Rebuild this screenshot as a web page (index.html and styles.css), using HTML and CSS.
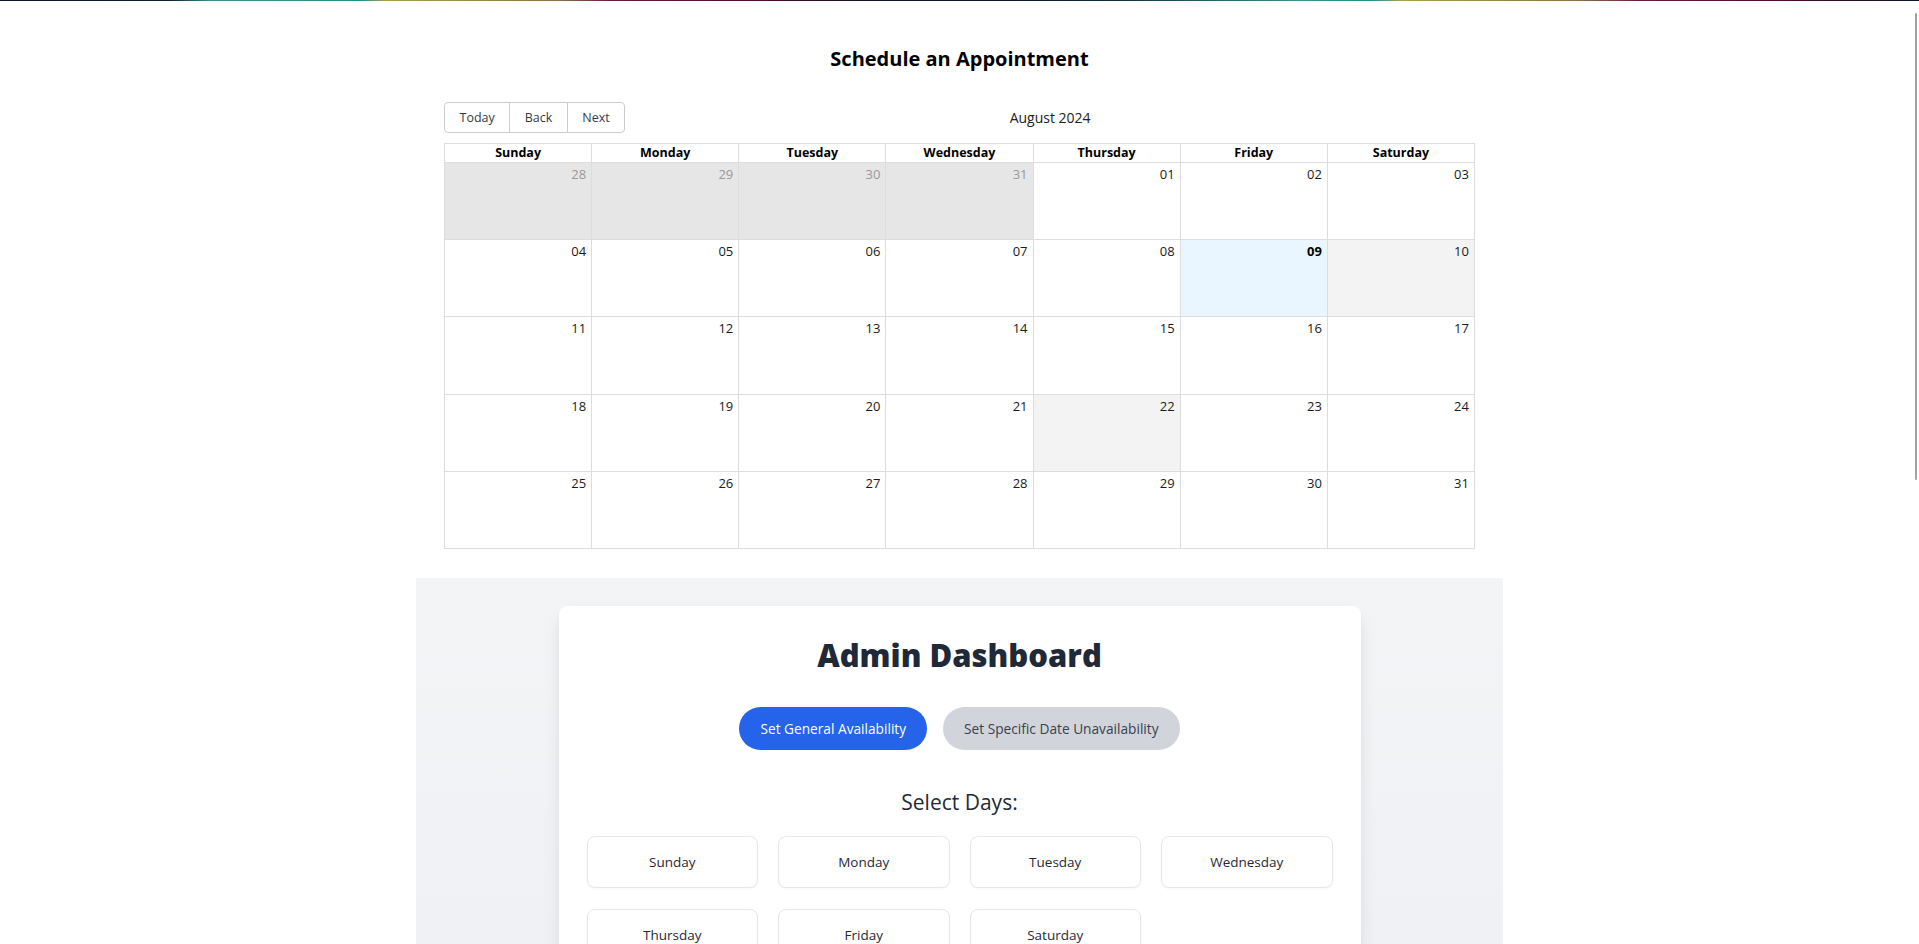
FILE: index.html
```html
<!DOCTYPE html>
<html lang="en">
<head>
<meta charset="utf-8">
<title>Schedule an Appointment</title>
<link rel="stylesheet" href="styles.css">
</head>
<body>
<div class="topbar"></div>
<div class="page">
  <section class="scheduler">
    <h1 class="sched-title">Schedule an Appointment</h1>
    <div class="calendar">
      <div class="toolbar">
        <div class="btn-group">
          <button type="button">Today</button>
          <button type="button">Back</button>
          <button type="button">Next</button>
        </div>
        <span class="toolbar-label">August 2024</span>
        <div class="btn-group"></div>
      </div>
      <div class="month">
        <div class="month-header">
          <div class="hcell">Sunday</div>
          <div class="hcell">Monday</div>
          <div class="hcell">Tuesday</div>
          <div class="hcell">Wednesday</div>
          <div class="hcell">Thursday</div>
          <div class="hcell">Friday</div>
          <div class="hcell">Saturday</div>
        </div>
        <div class="month-row">
          <div class="day off">28</div>
          <div class="day off">29</div>
          <div class="day off">30</div>
          <div class="day off">31</div>
          <div class="day">01</div>
          <div class="day">02</div>
          <div class="day">03</div>
        </div>
        <div class="month-row">
          <div class="day">04</div>
          <div class="day">05</div>
          <div class="day">06</div>
          <div class="day">07</div>
          <div class="day">08</div>
          <div class="day today">09</div>
          <div class="day blocked">10</div>
        </div>
        <div class="month-row">
          <div class="day">11</div>
          <div class="day">12</div>
          <div class="day">13</div>
          <div class="day">14</div>
          <div class="day">15</div>
          <div class="day">16</div>
          <div class="day">17</div>
        </div>
        <div class="month-row">
          <div class="day">18</div>
          <div class="day">19</div>
          <div class="day">20</div>
          <div class="day">21</div>
          <div class="day blocked">22</div>
          <div class="day">23</div>
          <div class="day">24</div>
        </div>
        <div class="month-row">
          <div class="day">25</div>
          <div class="day">26</div>
          <div class="day">27</div>
          <div class="day">28</div>
          <div class="day">29</div>
          <div class="day">30</div>
          <div class="day">31</div>
        </div>
      </div>
    </div>
  </section>

  <section class="admin">
    <div class="card">
      <h2 class="card-title">Admin Dashboard</h2>
      <div class="tabs">
        <button type="button" class="tab active">Set General Availability</button>
        <button type="button" class="tab">Set Specific Date Unavailability</button>
      </div>
      <h3 class="section-title">Select Days:</h3>
      <div class="days">
        <button type="button" class="day-btn">Sunday</button>
        <button type="button" class="day-btn">Monday</button>
        <button type="button" class="day-btn">Tuesday</button>
        <button type="button" class="day-btn">Wednesday</button>
        <button type="button" class="day-btn">Thursday</button>
        <button type="button" class="day-btn">Friday</button>
        <button type="button" class="day-btn">Saturday</button>
      </div>
    </div>
  </section>
</div>
<div class="scroll-thumb"></div>
</body>
</html>
```

FILE: styles.css
```css
html {
  scrollbar-width: none;
}
html::-webkit-scrollbar {
  display: none;
}

body {
  margin: 0;
  font-family: "Open Sans", "Noto Sans", sans-serif;
  color: #1a1a1a;
  background: #ffffff;
}

.topbar {
  height: 1px;
  background: linear-gradient(to right,
    #0b1526 0px, #0d2233 170px, #3f8f88 210px, #2f8c86 330px,
    #16908e 360px, #a7a24e 385px, #8a7048 560px, #6b1a3c 610px,
    #4a0c2c 760px, #101426 880px, #0b1526 1000px, #0f3040 1120px,
    #3f8f88 1300px, #16908e 1370px, #a7a24e 1400px, #8a7048 1580px,
    #6b1a3c 1640px, #4a0c2c 1780px, #0b1526 1919px);
}

.page {
  width: 1087px;
  margin: 0 auto;
}

/* ---------- scheduler ---------- */
.scheduler {
  padding: 0 28px 29px;
}

.sched-title {
  margin: 44px 0 29px;
  font-size: 20px;
  line-height: 28px;
  font-weight: 700;
  text-align: center;
  color: #000;
}

.toolbar {
  display: flex;
  align-items: center;
  margin-bottom: 10px;
}

.btn-group {
  display: flex;
}

.btn-group button {
  font-family: inherit;
  font-size: 12.5px;
  line-height: 17px;
  padding: 6px 14.5px;
  margin: 0;
  color: #373a3c;
  background: #fff;
  border: 1px solid #ccc;
  border-radius: 0;
}

.btn-group button + button {
  margin-left: -1px;
}

.btn-group button:first-child {
  border-radius: 4px 0 0 4px;
}

.btn-group button:last-child {
  border-radius: 0 4px 4px 0;
}

.toolbar-label {
  flex: 1;
  text-align: center;
  padding: 0 10px;
  font-size: 14px;
  color: #222;
}

.month {
  height: 406px;
  box-sizing: border-box;
  border: 1px solid #ddd;
  display: flex;
  flex-direction: column;
}

.month-header {
  display: flex;
}

.hcell {
  flex: 1 1 0;
  min-width: 0;
  padding: 0 3px;
  text-align: center;
  font-size: 12.5px;
  line-height: 18px;
  font-weight: 700;
  color: #000;
  border-bottom: 1px solid #ddd;
}

.hcell + .hcell {
  border-left: 1px solid #ddd;
}

.month-row {
  flex: 1 1 0;
  display: flex;
}

.month-row + .month-row {
  border-top: 1px solid #ddd;
}

.day {
  flex: 1 1 0;
  min-width: 0;
  padding: 3px 5px 0 1px;
  text-align: right;
  font-size: 13px;
  line-height: 16px;
  color: #1a1a1a;
}

.day + .day {
  border-left: 1px solid #ddd;
}

.day.off {
  background: #e6e6e6;
  color: #999;
}

.day.today {
  background: #eaf6ff;
  font-weight: 700;
  color: #000;
}

.day.blocked {
  background: #f3f3f3;
}

/* ---------- admin ---------- */
.admin {
  background: linear-gradient(#f3f4f6, #eef0f3);
  padding: 28px 0 60px;
}

.card {
  width: 802px;
  box-sizing: border-box;
  margin: 0 auto;
  padding: 28px;
  background: #fff;
  border-radius: 8px;
  box-shadow: 0 10px 20px -3px rgba(0, 0, 0, 0.1), 0 4px 8px -4px rgba(0, 0, 0, 0.1);
}

.card-title {
  margin: 0;
  text-align: center;
  font-size: 31px;
  line-height: 42px;
  font-weight: 800;
  color: #1f2937;
}

.tabs {
  display: flex;
  justify-content: center;
  gap: 16px;
  margin-top: 31px;
}

.tab {
  font-family: inherit;
  font-size: 13.7px;
  line-height: 21px;
  font-weight: 500;
  padding: 11px 21px;
  border: 0;
  border-radius: 9999px;
  background: #d1d5db;
  color: #374151;
}

.tab.active {
  background: #2563eb;
  color: #fff;
}

.section-title {
  margin: 38px 0 0;
  text-align: center;
  font-size: 21px;
  line-height: 28px;
  font-weight: 500;
  color: #1f2937;
}

.days {
  display: grid;
  grid-template-columns: repeat(4, 1fr);
  gap: 21px 20px;
  margin-top: 20px;
}

.day-btn {
  font-family: inherit;
  font-size: 13.5px;
  line-height: 20px;
  font-weight: 500;
  padding: 15px 0;
  background: #fff;
  color: #1f2937;
  border: 1px solid #e5e7eb;
  border-radius: 8px;
  box-shadow: 0 1px 2px rgba(0, 0, 0, 0.03);
}

.scroll-thumb {
  position: fixed;
  top: 13px;
  right: 2px;
  width: 2px;
  height: 467px;
  border-radius: 1px;
  background: #a3a3a3;
}
```
